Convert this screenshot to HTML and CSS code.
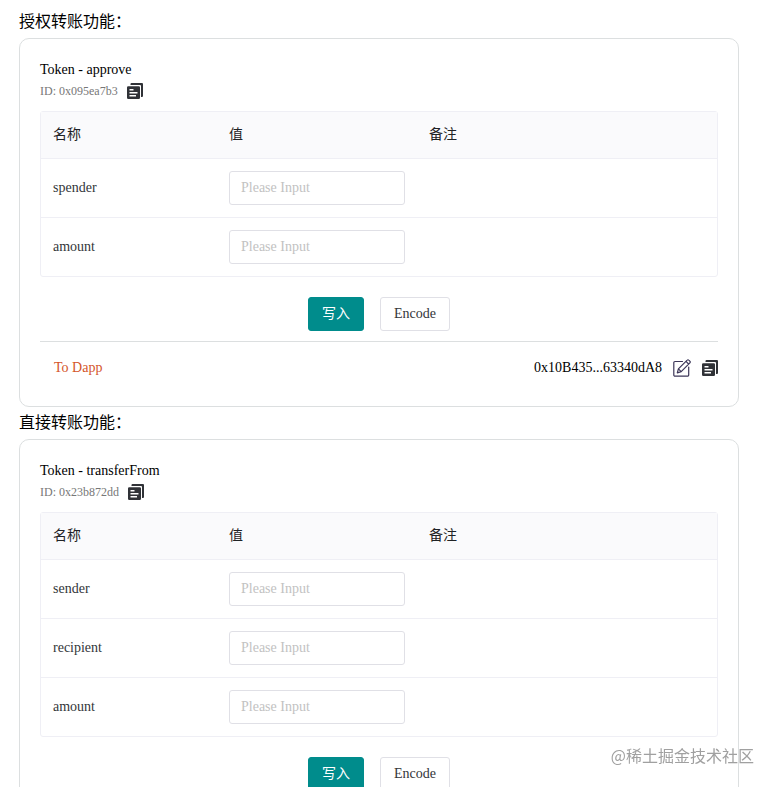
FILE: index.html
```html
<!DOCTYPE html>
<html lang="zh-CN">
<head>
    <meta charset="UTF-8">
    <meta name="viewport" content="width=device-width, initial-scale=1.0">
    <title>Token</title>
    <link rel="stylesheet" href="styles.css">
</head>
<body>
    <svg class="symbols" aria-hidden="true">
        <symbol id="icon-copy" viewBox="0 0 16 16">
            <path fill="#303237" d="M4.500 0H15a1 1 0 0 1 1 1v12a1 1 0 0 1-1 1h-1V3a1 1 0 0 0-1-1H3.500V1a1 1 0 0 1 1-1z"/>
            <path fill="#303237" fill-rule="evenodd" d="M1.200 3.200h10.600A1.200 1.200 0 0 1 13 4.400v10.400a1.200 1.200 0 0 1-1.200 1.200H1.200A1.200 1.200 0 0 1 0 14.800V4.400a1.200 1.200 0 0 1 1.200-1.200zM2.500 6v1.500h4V6zM2.500 9v1.500h8V9zM2.500 12v1.400h6.500V12z"/>
        </symbol>
        <symbol id="icon-edit" viewBox="0 0 18 18">
            <path fill="none" stroke="#3c3658" stroke-width="1.200" stroke-linecap="round" stroke-linejoin="round" d="M9.500 2.500H2a1.200 1.200 0 0 0-1.200 1.200V16A1.200 1.200 0 0 0 2 17.200h12.500a1.200 1.200 0 0 0 1.200-1.200V8M4.300 13.900l1.100-4L14.200 1.100a1.100 1.100 0 0 1 1.600 0l1.100 1.100a1.100 1.100 0 0 1 0 1.600L8.200 12.600zM13 2.400l2.600 2.600M5.400 9.900l2.800 2.700"/>
        </symbol>
    </svg>

    <main>
        <h2>授权转账功能：</h2>
        <section class="card">
            <h3>Token - approve</h3>
            <div class="token-id">
                <span>ID: 0x095ea7b3</span>
                <button class="icon-btn" aria-label="Copy ID"><svg width="16" height="16"><use href="#icon-copy"/></svg></button>
            </div>
            <table>
                <thead>
                    <tr><th class="col-name">名称</th><th class="col-value">值</th><th>备注</th></tr>
                </thead>
                <tbody>
                    <tr>
                        <td><label for="approve-spender">spender</label></td>
                        <td><input type="text" id="approve-spender" placeholder="Please Input"></td>
                        <td></td>
                    </tr>
                    <tr>
                        <td><label for="approve-amount">amount</label></td>
                        <td><input type="text" id="approve-amount" placeholder="Please Input"></td>
                        <td></td>
                    </tr>
                </tbody>
            </table>
            <div class="actions">
                <button class="btn btn-primary">写入</button>
                <button class="btn">Encode</button>
            </div>
            <div class="card-footer">
                <a href="#">To Dapp</a>
                <div class="address">
                    <span>0x10B435...63340dA8</span>
                    <button class="icon-btn" aria-label="Edit address"><svg width="18" height="18"><use href="#icon-edit"/></svg></button>
                    <button class="icon-btn" aria-label="Copy address"><svg width="16" height="16"><use href="#icon-copy"/></svg></button>
                </div>
            </div>
        </section>

        <h2>直接转账功能：</h2>
        <section class="card">
            <h3>Token - transferFrom</h3>
            <div class="token-id">
                <span>ID: 0x23b872dd</span>
                <button class="icon-btn" aria-label="Copy ID"><svg width="16" height="16"><use href="#icon-copy"/></svg></button>
            </div>
            <table>
                <thead>
                    <tr><th class="col-name">名称</th><th class="col-value">值</th><th>备注</th></tr>
                </thead>
                <tbody>
                    <tr>
                        <td><label for="transfer-sender">sender</label></td>
                        <td><input type="text" id="transfer-sender" placeholder="Please Input"></td>
                        <td></td>
                    </tr>
                    <tr>
                        <td><label for="transfer-recipient">recipient</label></td>
                        <td><input type="text" id="transfer-recipient" placeholder="Please Input"></td>
                        <td></td>
                    </tr>
                    <tr>
                        <td><label for="transfer-amount">amount</label></td>
                        <td><input type="text" id="transfer-amount" placeholder="Please Input"></td>
                        <td></td>
                    </tr>
                </tbody>
            </table>
            <div class="actions">
                <button class="btn btn-primary">写入</button>
                <button class="btn">Encode</button>
            </div>
        </section>
    </main>

    <div class="watermark">@稀土掘金技术社区</div>
</body>
</html>
```

FILE: styles.css
```css
* {
    box-sizing: border-box;
}
body {
    margin: 0;
    height: 100vh;
    overflow: hidden;
    background: #fff;
    color: #000;
    font-family: "Liberation Serif", "Noto Sans CJK SC", serif;
    font-size: 14px;
}
.symbols {
    display: none;
}
main {
    padding: 6px 37px 0 19px;
}
h2 {
    margin: 0;
    font-size: 16px;
    font-weight: normal;
    line-height: 32px;
}
h3 {
    margin: 0;
    font-size: 14px;
    font-weight: normal;
    line-height: 22px;
}
.card {
    padding: 20px;
    border: 1px solid #dcdfe0;
    border-radius: 10px;
}
.token-id {
    display: flex;
    align-items: center;
    gap: 9px;
    height: 20px;
    margin-bottom: 10px;
    color: #777;
    font-size: 12px;
}
.icon-btn {
    display: flex;
    padding: 0;
    border: none;
    background: none;
    cursor: pointer;
}
table {
    width: 100%;
    table-layout: fixed;
    border: 1px solid #efeff5;
    border-radius: 3px;
    border-spacing: 0;
    color: #333639;
}
th,
td {
    padding: 12px;
    text-align: left;
    font-weight: normal;
}
th {
    padding: 11px 12px;
    background: #fafafc;
    border-bottom: 1px solid #efeff5;
    color: #1f2225;
    line-height: 24px;
}
td {
    border-bottom: 1px solid #efeff5;
}
tr:last-child td {
    border-bottom: none;
}
.col-name {
    width: 176px;
}
.col-value {
    width: 200px;
}
input {
    display: block;
    width: 100%;
    height: 34px;
    padding: 0 11px;
    border: 1px solid #e0e0e6;
    border-radius: 3px;
    font: inherit;
}
input::placeholder {
    color: #c2c2c2;
}
.actions {
    display: flex;
    justify-content: center;
    gap: 16px;
    padding: 20px 0 10px;
}
.btn {
    height: 34px;
    padding: 0 13px;
    border: 1px solid #e0e0e6;
    border-radius: 3px;
    background: #fff;
    color: #333639;
    font: inherit;
    line-height: 20px;
    cursor: pointer;
}
.btn-primary {
    background: #008c8c;
    border-color: #008c8c;
    color: #fff;
}
.card-footer {
    display: flex;
    justify-content: space-between;
    align-items: center;
    height: 45px;
    padding: 8px 0 0 14px;
    border-top: 1px solid #dcdfe0;
}
.card-footer a {
    color: #d4552b;
    text-decoration: none;
}
.address {
    display: flex;
    align-items: center;
    gap: 11px;
}
.watermark {
    position: fixed;
    right: 22px;
    bottom: 20px;
    color: #a0a0a0;
    font-family: "Noto Sans CJK SC", sans-serif;
    font-size: 16px;
    line-height: 24px;
}
```
